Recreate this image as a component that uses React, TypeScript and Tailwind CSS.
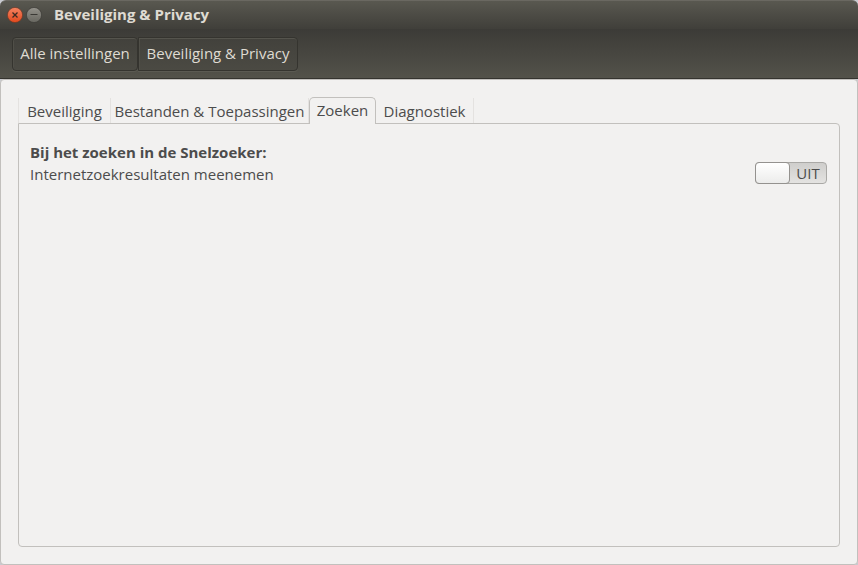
import { useState } from "react";

const tabs = [
  { name: "Beveiliging", width: "w-[93px]" },
  { name: "Bestanden & Toepassingen", width: "w-[198px]" },
  { name: "Zoeken", width: "w-[67px]" },
  { name: "Diagnostiek", width: "w-[98px]" },
];

const toolButton =
  "h-[34px] border border-[#35342f] bg-linear-to-b from-[#42413c] to-[#4b4a43] pb-0.5 text-center text-[#dfdbd2] shadow-[inset_0_1px_0_#55544d,inset_1px_0_0_#504f48,0_1px_0_#5b5a52] whitespace-nowrap";

export default function App() {
  const [active, setActive] = useState("Zoeken");
  const [online, setOnline] = useState(false);

  return (
    <div className="flex min-h-screen flex-col bg-[#c9cbd1] font-['Open_Sans','Noto_Sans',sans-serif] text-[15px] leading-5 text-[#4c4c4c]">
      <header className="flex h-[29px] shrink-0 items-center rounded-t-md border-t border-[#6a6861] bg-linear-to-b from-[#595850] to-[#403f3a] pl-[7px]">
        <button aria-label="Sluiten" className="mr-[3px] size-4">
          <svg viewBox="0 0 16 16" className="size-4">
            <defs>
              <linearGradient id="close" x2="0" y2="1">
                <stop stopColor="#f58462" />
                <stop offset="1" stopColor="#e2481c" />
              </linearGradient>
            </defs>
            <circle cx="8" cy="8" r="7.6" fill="url(#close)" stroke="#6b3a28" strokeWidth="0.7" />
            <path d="M5.5 5.5l5 5m0-5l-5 5" stroke="#3c2a22" strokeWidth="1.3" />
          </svg>
        </button>
        <button aria-label="Minimaliseren" className="mr-3 size-4">
          <svg viewBox="0 0 16 16" className="size-4">
            <defs>
              <linearGradient id="minimise" x2="0" y2="1">
                <stop stopColor="#94928b" />
                <stop offset="1" stopColor="#67665f" />
              </linearGradient>
            </defs>
            <circle cx="8" cy="8" r="7.6" fill="url(#minimise)" stroke="#3c3b37" strokeWidth="0.7" />
            <path d="M4.5 7.5h7" stroke="#3a3935" />
          </svg>
        </button>
        <h1 className="pb-0.5 font-bold text-[#dfdbd2]">Beveiliging &amp; Privacy</h1>
      </header>

      <nav className="flex h-[50px] shrink-0 items-start border-b border-[#35342f] bg-linear-to-b from-[#3c3b37] to-[#53524a] px-3 pt-2">
        <button className={`${toolButton} w-[126px] rounded-sm`}>Alle instellingen</button>
        <button className={`${toolButton} w-[160px] rounded-r-sm`}>Beveiliging &amp; Privacy</button>
      </nav>

      <main className="flex flex-1 flex-col rounded-sm border border-[#c2c0bd] bg-[#f2f1f0] p-[17px]">
        <div role="tablist" className="flex h-[26px] items-end">
          {tabs.map((tab) => (
            <button
              key={tab.name}
              id={tab.name}
              role="tab"
              aria-selected={active === tab.name}
              onClick={() => setActive(tab.name)}
              className={`${tab.width} shrink-0 whitespace-nowrap ${
                active === tab.name
                  ? "relative -mb-px h-[27px] rounded-t-[5px] border border-b-0 border-[#c2c0bd] bg-[#f2f1f0] pb-0.5"
                  : "h-[25px] border-r border-[#e4e2e0] first:border-l"
              }`}
            >
              {tab.name}
            </button>
          ))}
        </div>
        <section
          role="tabpanel"
          aria-labelledby={active}
          className="flex-1 rounded-b-sm rounded-tr-sm border border-[#c2c0bd] px-[11px] pt-[18px]"
        >
          <h2 className="font-bold">Bij het zoeken in de Snelzoeker:</h2>
          <label className="flex items-start justify-between">
            <span className="pt-0.5">Internetzoekresultaten meenemen</span>
            <span className="relative mr-px flex h-[22px] w-[72px] rounded-sm border border-[#aaa9a6] bg-linear-to-b from-[#cfcecc] to-[#e4e3e1]">
              <input
                type="checkbox"
                role="switch"
                checked={online}
                onChange={() => setOnline(!online)}
                className="absolute inset-0 appearance-none"
              />
              <span
                className={`-my-px h-[22px] w-[35px] shrink-0 rounded-sm border border-[#94928f] bg-linear-to-b from-white to-[#ececeb] ${
                  online ? "order-2 -mr-px" : "-ml-px"
                }`}
              />
              <span className="flex-1 text-center">{online ? "AAN" : "UIT"}</span>
            </span>
          </label>
        </section>
      </main>
    </div>
  );
}
